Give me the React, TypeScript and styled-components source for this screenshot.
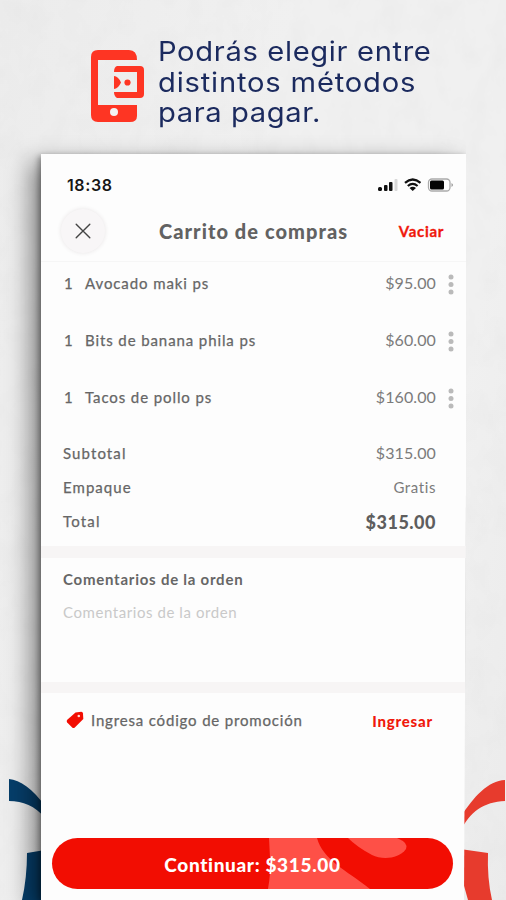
import React from 'react';
import styled, { createGlobalStyle } from 'styled-components';

const GlobalStyle = createGlobalStyle`
  * { box-sizing: border-box; }
  body { margin: 0; overflow: hidden; font-family: Lato, "Open Sans", sans-serif; }
`;

const Page = styled.main`
  position: relative;
  width: 506px;
  height: 900px;
  overflow: hidden;
  display: flex;
  flex-direction: column;
  background: linear-gradient(100deg, #ececec 0%, #f0f0f0 45%, #f0f0f0 80%, #ebebeb 100%);
`;

const Backdrop = styled.svg`
  position: absolute;
  inset: 0;
`;

const Banner = styled.header`
  position: relative;
  height: 154px;
  flex: none;
  display: flex;
  align-items: flex-start;
  padding: 36px 0 0 91px;
`;

const PhoneIcon = styled.svg`
  flex: none;
  margin-top: 14px;
`;

const Headline = styled.h1`
  margin: 1px 0 0 14px;
  font: 400 27px/30.5px Inter, sans-serif;
  color: #1b2a5e;
  transform: scaleX(1.08);
  transform-origin: 0 0;
`;

const Line = styled.span<{ $ls?: number }>`
  display: block;
  white-space: nowrap;
  letter-spacing: ${p => p.$ls ?? 0}px;
`;

const Screen = styled.section`
  position: relative;
  width: 425px;
  height: 746px;
  margin-left: 41px;
  background: #fdfdfd;
  display: flex;
  flex-direction: column;
  box-shadow: -11px 8px 22px rgba(0, 0, 0, 0.42), -2px 2px 6px rgba(0, 0, 0, 0.38);
  clip-path: polygon(-41px -30px, 100% -30px, 100% 45%, calc(100% - 2px) 100%, -41px 100%);
`;

const StatusBar = styled.div`
  height: 50px;
  display: flex;
  justify-content: space-between;
  align-items: center;
  padding: 12px 12px 0 26px;
`;

const StatusIcons = styled.svg`
  flex: none;
`;

const TitleBar = styled.div`
  height: 58px;
  display: grid;
  grid-template-columns: 44px 1fr auto;
  align-items: center;
  padding: 0 22px 4px 20px;
  border-bottom: 1px solid #f6f6f6;
`;

const CloseButton = styled.button`
  width: 44px;
  height: 44px;
  padding: 0;
  border: 0;
  border-radius: 50%;
  background: #f8f6f7;
  box-shadow: 0 0 4px rgba(70, 50, 60, 0.12);
  display: grid;
  place-items: center;
`;

const Text = styled.span<{ $size?: number; $weight?: number; $color?: string; $ls?: number; $stroke?: number }>`
  font-size: ${p => p.$size ?? 15}px;
  font-weight: ${p => p.$weight ?? 400};
  line-height: 20px;
  color: ${p => p.$color ?? '#666'};
  letter-spacing: ${p => p.$ls ?? 0}px;
  -webkit-text-stroke: ${p => p.$stroke ?? 0}px currentColor;
  white-space: nowrap;
`;

const Title = styled(Text).attrs({ as: 'h2' })`
  margin: 0 0 0 54px;
`;

const TimeText = styled(Text)`
  font-family: Inter, sans-serif;
`;

const Items = styled.ul`
  list-style: none;
  margin: 0;
  padding: 0;
`;

const ItemRow = styled.li`
  height: 57px;
  display: grid;
  grid-template-columns: 21px 1fr auto 18px;
  align-items: start;
  padding: 11px 12px 0 23px;
`;

const MoreIcon = styled.svg`
  margin: 1px 0 0 12px;
  overflow: visible;
`;

const Totals = styled.div`
  height: 113px;
  display: flex;
  flex-direction: column;
  gap: 14px;
  padding: 10px 30px 0 22px;
`;

const TotalRow = styled.div`
  height: 20px;
  display: flex;
  justify-content: space-between;
`;

const GrandTotal = styled(Text)`
  margin-top: 1px;
`;

const Divider = styled.div<{ $h: number }>`
  height: ${p => p.$h}px;
  background: #f7f5f5;
  flex: none;
`;

const Comments = styled.div`
  height: 124px;
  display: flex;
  flex-direction: column;
  gap: 13px;
  padding: 11px 22px;
`;

const Promo = styled.div`
  height: 145px;
  display: flex;
  align-items: flex-start;
  padding: 17px 33px 0 25px;
`;

const TagIcon = styled.svg`
  margin: 1px 7px 0 0;
  flex: none;
`;

const Action = styled(Text)`
  margin: 1px 0 0 auto;
`;

const ContinueButton = styled.button`
  position: relative;
  width: 401px;
  height: 51px;
  margin-left: 11px;
  padding: 2px 0 0;
  border: 0;
  border-radius: 26px;
  overflow: hidden;
  background: #f20d02;
  font-family: inherit;
  display: flex;
  align-items: center;
  justify-content: center;
  flex: none;
`;

const ButtonArt = styled.svg`
  position: absolute;
  inset: 0;
`;

const ButtonLabel = styled(Text)`
  position: relative;
`;

const items = [
  { name: 'Avocado maki ps', price: '$95.00' },
  { name: 'Bits de banana phila ps', price: '$60.00' },
  { name: 'Tacos de pollo ps', price: '$160.00' },
];

export default function App() {
  return (
    <>
      <GlobalStyle />
      <Page>
        <Backdrop width="506" height="900" viewBox="0 0 506 900">
          <defs>
            <filter id="plaster" x="0" y="0" width="100%" height="100%">
              <feTurbulence type="fractalNoise" baseFrequency="0.045 0.03" numOctaves="4" seed="8" />
              <feColorMatrix values="0 0 0 0 0.5  0 0 0 0 0.5  0 0 0 0 0.5  0.14 0 0 0 -0.055" />
            </filter>
          </defs>
          <rect width="506" height="900" filter="url(#plaster)" />
          <path d="M9 779C20 780 33 789 45 806V818C35 806 23 801 9 801Z" fill="#063e6a" />
          <path d="M27 853L45 850V900H22Q27 878 27 853Z" fill="#063e6a" />
          <path d="M505 780C488 781 474 796 460 818V832C470 811 484 802 505 801Z" fill="#e73b2d" />
          <path d="M460 849L488 853Q487 878 492 900H468Q463 884 460 868Z" fill="#e73b2d" />
        </Backdrop>
        <Banner>
          <PhoneIcon width="53" height="72" viewBox="0 0 53 72" fill="#fe3523">
            <path d="M7 0H38Q46 0 46 10H7V55H46V66Q46 72 39 72H7Q0 72 0 65V7Q0 0 7 0Z" />
            <circle cx="23" cy="62" r="4" fill="#f4f2f2" />
            <path d="M26 16H49Q53 16 53 20V44Q53 48 49 48H26Q23 46 23 42H46V22H23Q23 17 26 16Z" />
            <path d="M23 26Q27 26 30 32.500Q27 39 23 39Z" />
            <circle cx="36.500" cy="32.500" r="3.100" />
          </PhoneIcon>
          <Headline>
            <Line $ls={0.6}>Podrás elegir entre</Line>
            <Line $ls={0.75}>distintos métodos</Line>
            <Line $ls={0.55}>para pagar.</Line>
          </Headline>
        </Banner>
        <Screen>
          <StatusBar>
            <TimeText $size={16} $weight={600} $color="#171717" $ls={0.6}>18:38</TimeText>
            <StatusIcons width="76" height="14" viewBox="0 0 76 14">
              <rect x="0" y="9" width="4" height="4" rx="1.500" fill="#111" />
              <rect x="6" y="7" width="3.500" height="6" rx="1" fill="#111" />
              <rect x="11" y="4" width="3.500" height="9" rx="1" fill="#111" />
              <rect x="16.500" y="1" width="3" height="12" rx="1" fill="#d8d8d8" />
              <g fill="none" stroke="#111" strokeWidth="2.200">
                <path d="M27 4.800Q34.700 -1.800 42.500 4.800" />
                <path d="M29.800 8Q34.700 3.800 39.600 8" />
              </g>
              <path d="M31.500 10Q34.700 7.500 38 10L34.700 13Z" fill="#111" />
              <rect x="50.500" y="1" width="21.500" height="12" rx="3.500" fill="#fff" stroke="#aaa" strokeWidth="1.300" />
              <rect x="52" y="2.500" width="14" height="9" rx="1.500" fill="#050505" />
              <path d="M73.500 5Q76.500 7 73.500 9Z" fill="#999" />
            </StatusIcons>
          </StatusBar>
          <TitleBar>
            <CloseButton aria-label="Cerrar">
              <svg width="16" height="16" viewBox="0 0 16 16" stroke="#444" strokeWidth="1.400" strokeLinecap="round">
                <path d="M1.200 1.200L14.800 14.800M14.800 1.200L1.200 14.800" />
              </svg>
            </CloseButton>
            <Title $size={20} $weight={900} $color="#626262" $ls={1.05}>Carrito de compras</Title>
            <Text $weight={700} $color="#f0180c" $ls={0.7} $stroke={0.3}>Vaciar</Text>
          </TitleBar>
          <Items>
            {items.map(item => (
              <ItemRow key={item.name}>
                <Text $stroke={0.25}>1</Text>
                <Text $ls={0.9} $stroke={0.25}>{item.name}</Text>
                <Text $size={16} $ls={0.1} $color="#7b7b7b">{item.price}</Text>
                <MoreIcon width="6" height="21" viewBox="0 0 6 21" fill="#bababa">
                  <circle cx="3" cy="3" r="2.500" />
                  <circle cx="3" cy="10.500" r="2.500" />
                  <circle cx="3" cy="18" r="2.500" />
                </MoreIcon>
              </ItemRow>
            ))}
          </Items>
          <Totals>
            <TotalRow>
              <Text $ls={1.1} $stroke={0.25}>Subtotal</Text>
              <Text $size={16} $ls={0.1} $color="#7b7b7b">$315.00</Text>
            </TotalRow>
            <TotalRow>
              <Text $ls={1.05} $stroke={0.25}>Empaque</Text>
              <Text $ls={0.6} $color="#7b7b7b">Gratis</Text>
            </TotalRow>
            <TotalRow>
              <Text $ls={1.2} $stroke={0.25}>Total</Text>
              <GrandTotal $size={18} $weight={900} $color="#5e5e5e" $ls={0.5}>$315.00</GrandTotal>
            </TotalRow>
          </Totals>
          <Divider $h={12} />
          <Comments>
            <Text $ls={0.76} $weight={700}>Comentarios de la orden</Text>
            <Text $ls={0.57} $color="#c9c9c9">Comentarios de la orden</Text>
          </Comments>
          <Divider $h={11} />
          <Promo>
            <TagIcon width="18" height="18" viewBox="0 0 18 18">
              <path d="M9.500 1.500L15.300 0.800Q16.800 1 17 2.600L17.300 8L8.800 16.500Q7.500 17.500 6.200 16.500L1.200 11.500Q0 10 1.300 8.800Z" fill="#f20d02" />
              <circle cx="12.800" cy="5" r="1.300" fill="#ffd8d4" />
            </TagIcon>
            <Text $ls={0.83} $stroke={0.25}>Ingresa código de promoción</Text>
            <Action $weight={900} $color="#f0180c" $ls={0.8}>Ingresar</Action>
          </Promo>
          <ContinueButton>
            <ButtonArt width="401" height="51" viewBox="0 0 401 51" fill="#fe5047">
              <path d="M217 0H265C271 22 294 32 318 51H216Q219 34 218 20Z" />
              <path d="M296 0H345Q357 5 354 11C347 21 330 22 320 17Q305 9 296 0Z" />
            </ButtonArt>
            <ButtonLabel $size={19} $weight={900} $color="#fff" $ls={0.65}>Continuar: $315.00</ButtonLabel>
          </ContinueButton>
        </Screen>
      </Page>
    </>
  );
}
